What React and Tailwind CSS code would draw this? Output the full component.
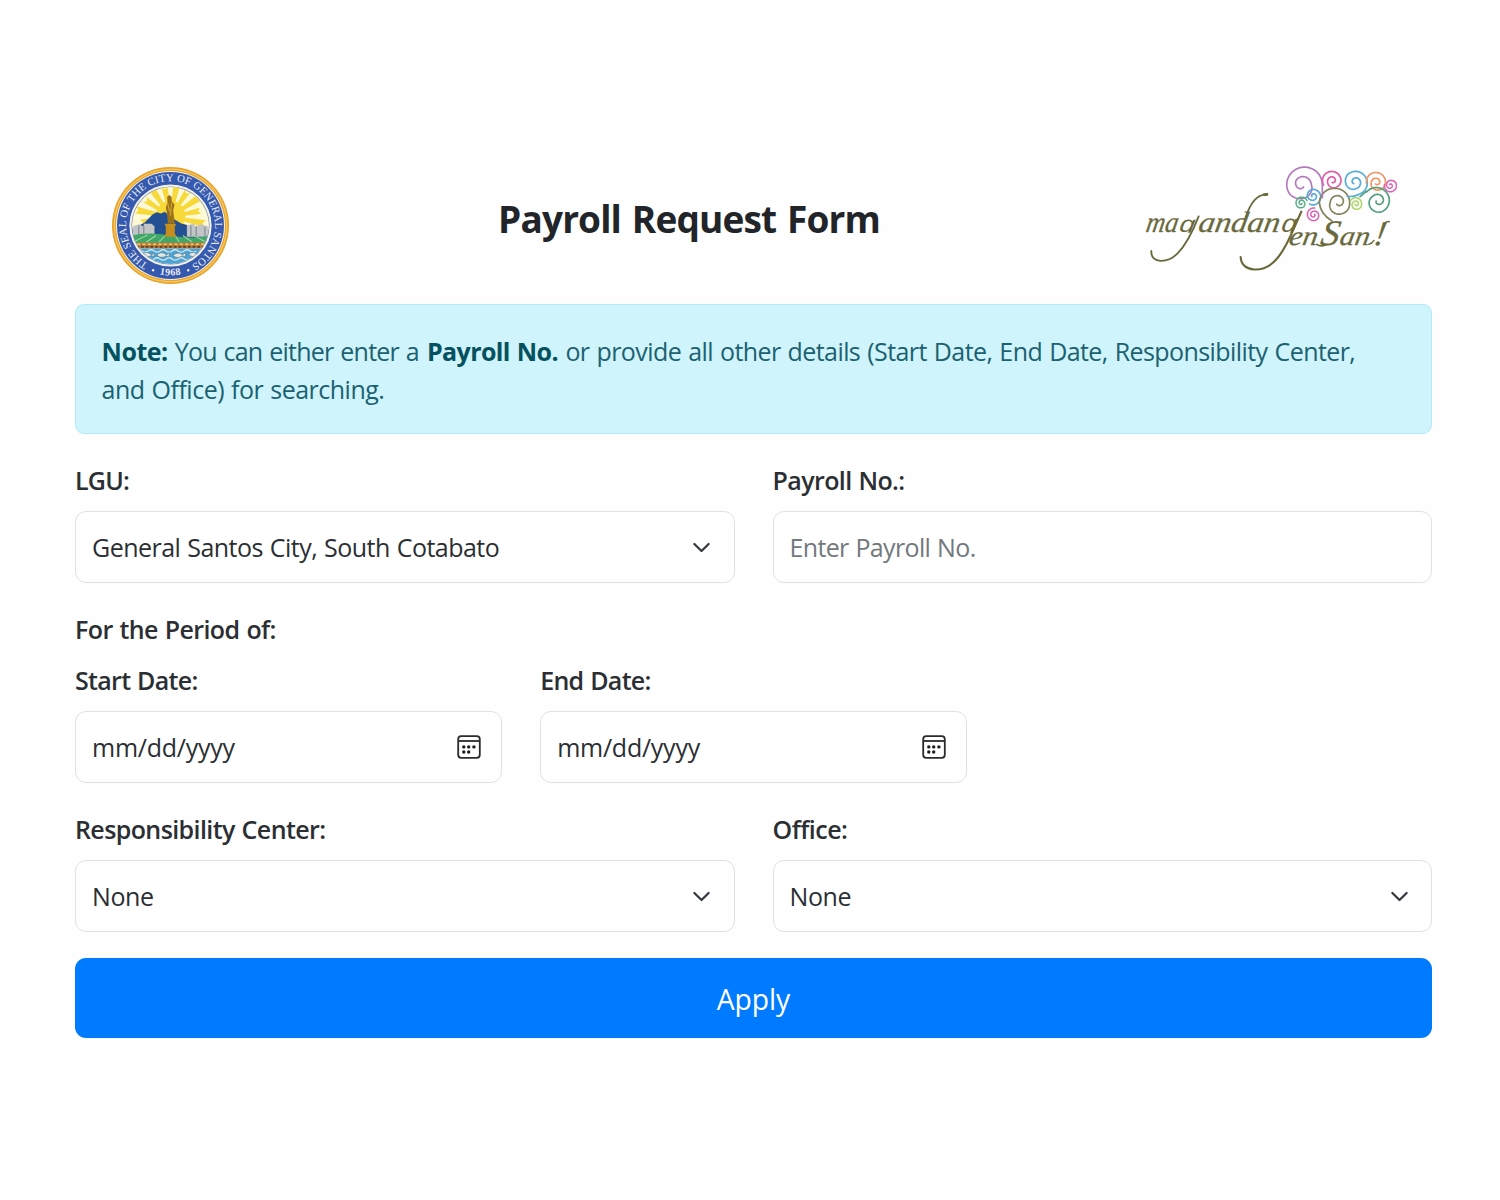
import React from "react";

const rays = Array.from({ length: 16 }, (_, i) => {
  const a = ((i + 0.5) * Math.PI) / 8;
  const r = i % 2 ? 92 : 106;
  const p = (ang, d) => `${(213 + d * Math.cos(ang)).toFixed(1)},${(184 + d * Math.sin(ang)).toFixed(1)}`;
  return `${p(a - 0.2, 20)} ${p(a - 0.1, r)} ${p(a, r - 8)} ${p(a + 0.1, r)} ${p(a + 0.2, 20)}`;
});

function Seal() {
  return (
    <svg viewBox="38 35 350 350" className="size-[117px] shrink-0" aria-label="City seal">
      <defs>
        <path id="ring-top" d="M146 325 A133 133 0 1 1 280 325" />
        <path id="ring-bottom" d="M130 334 A149 149 0 0 0 296 334" />
        <clipPath id="seal-core">
          <circle cx="213" cy="210" r="115" />
        </clipPath>
      </defs>
      <circle cx="213" cy="210" r="175" fill="#e6a22c" />
      <circle cx="213" cy="210" r="168" fill="none" stroke="#f6c75c" strokeWidth="4" />
      <circle cx="213" cy="210" r="163" fill="#f5f1e2" />
      <circle cx="213" cy="210" r="160" fill="#3459ae" />
      <circle cx="213" cy="210" r="123" fill="#f4f3ea" />
      <circle cx="213" cy="210" r="117" fill="#7d8bad" />
      <g clipPath="url(#seal-core)">
        <rect x="95" y="90" width="240" height="240" fill="#fdf9d6" />
        {rays.map((p) => (
          <polygon key={p} points={p} fill="#f8d93a" />
        ))}
        <circle cx="213" cy="180" r="44" fill="#f8d93a" />
        <path d="M95 222 L135 202 L160 176 L172 170 L184 174 L196 169 L212 184 L245 204 L300 218 L335 225 V250 H95Z" fill="#235092" />
        <path d="M99 213 L118 206 L133 213 V205 H156 L165 212 V244 H99Z M262 244 V209 L282 204 L288 212 L305 206 L330 214 V244Z" fill="#c2c5c8" />
        <path d="M133 211 V243 M118 210 V243 M274 210 V243 M290 213 V243 M316 214 V243" stroke="#8b9298" strokeWidth="4" />
        <path d="M95 240 Q150 228 213 240 T335 240 V270 H95Z" fill="#3fa767" />
        <path d="M105 258 L145 238 M140 260 L170 240 M178 260 L196 242 M240 260 L228 242 M278 260 L250 240 M315 258 L280 238" stroke="#a6d99c" strokeWidth="3" />
        <path d="M195 205 H230 L226 214 V235 L232 244 H193 L199 235 V214Z" fill="#c58e1d" />
        <path d="M205 204 L203 176 L199 158 L204 140 L203 125 L209 119 L216 123 L217 138 L225 147 L221 166 L226 204Z" fill="#9b7217" />
        <path d="M204 140 L210 168 M216 142 L213 180" stroke="#d9ac3a" strokeWidth="3" />
        <rect x="95" y="261" width="240" height="18" fill="#b97b3c" />
        <path d="M97 266 H330" stroke="#f1cf65" strokeWidth="5" strokeDasharray="9 7" />
        <path d="M97 274 H330" stroke="#5b4028" strokeWidth="5" strokeDasharray="8 6" />
        <rect x="95" y="279" width="240" height="50" fill="#4ba3d6" />
        <path d="M110 286 q9 -7 18 0 t18 0 t18 0 t18 0 t18 0 t18 0 t18 0 t18 0 t18 0 t18 0 M128 310 q9 -7 18 0 t18 0 t18 0 t18 0 t18 0 t18 0 t18 0 t18 0" fill="none" stroke="#c9e6f2" strokeWidth="4" />
        <path d="M128 296 q14 -11 28 2 l8 -6 v12 l-8 -4 q-15 9 -28 -4 M172 298 q14 -13 29 0 l9 -7 -2 14 -8 -4 q-16 10 -28 -3 M220 300 q16 -14 29 -2 l9 -7 v13 l-9 -3 q-16 10 -29 -1 M267 296 q13 -11 25 0 l7 -5 v11 l-8 -3 q-14 9 -24 -3" fill="#e8e7df" stroke="#5f7d8b" strokeWidth="2" />
      </g>
      <g fill="#e9ecf4" fontFamily="Liberation Serif, serif">
        <text fontSize="32" textLength="700" lengthAdjust="spacing">
          <textPath href="#ring-top" textLength="700" lengthAdjust="spacing">THE SEAL OF THE CITY OF GENERAL SANTOS</textPath>
        </text>
        <text fontSize="30" fontWeight="700" textAnchor="middle" letterSpacing="1.5">
          <textPath href="#ring-bottom" startOffset="50%">1968</textPath>
        </text>
      </g>
      <circle cx="161" cy="344" r="3.5" fill="#f4f4f4" />
      <circle cx="266" cy="344" r="3.5" fill="#f4f4f4" />
    </svg>
  );
}

// [turns travelled, fraction of the outer radius]
const profile = [[0, 1], [0.6, 0.96], [0.78, 0.78], [1, 0.54], [1.4, 0.42], [1.9, 0.12]];

function radiusAt(turn) {
  for (let i = 1; i < profile.length; i++) {
    const [t0, r0] = profile[i - 1];
    const [t1, r1] = profile[i];
    if (turn <= t1) return r0 + ((r1 - r0) * (turn - t0)) / (t1 - t0);
  }
  return 0.12;
}

// Curl that follows an outer circle and winds in towards an inner centre.
function spiral({ from, to, r, start, dir }) {
  const n = 80;
  let d = "";
  for (let i = 0; i <= n; i++) {
    const turn = (i / n) * 1.85;
    const k = Math.min(1, turn);
    const cx = from[0] + (to[0] - from[0]) * k;
    const cy = from[1] + (to[1] - from[1]) * k;
    const rr = r * radiusAt(turn);
    const a = (start * Math.PI) / 180 + dir * turn * 2 * Math.PI;
    d += `${i ? "L" : "M"}${(cx + rr * Math.cos(a)).toFixed(1)} ${(cy + rr * Math.sin(a)).toFixed(1)}`;
  }
  return d;
}

const curls = [
  { c: "#b478bd", w: 5, from: [525, 87], to: [516, 89], r: 52, start: 0, dir: -1 },
  { c: "#e25ba5", w: 5, from: [605, 76], to: [607, 78], r: 28, start: 150, dir: 1 },
  { c: "#55acd8", w: 5, from: [678, 84], to: [675, 82], r: 35, start: 80, dir: -1 },
  { c: "#ef9766", w: 5, from: [738, 80], to: [739, 83], r: 29, start: 170, dir: 1 },
  { c: "#dd60b2", w: 4.5, from: [782, 92], to: [780, 91], r: 19, start: 190, dir: -1 },
  { c: "#55acd8", w: 5, from: [550, 127], to: [549, 124], r: 23, start: 120, dir: -1 },
  { c: "#58b184", w: 4.5, from: [515, 143], to: [514, 144], r: 17, start: -20, dir: -1 },
  { c: "#dd60b2", w: 4.5, from: [551, 178], to: [551, 179], r: 19, start: -80, dir: -1 },
  { c: "#85835c", w: 5, from: [611, 142], to: [624, 142], r: 43, start: 180, dir: 1 },
  { c: "#a9d665", w: 4.5, from: [677, 146], to: [678, 147], r: 18, start: -150, dir: 1 },
  { c: "#529e7b", w: 5, from: [739, 135], to: [744, 137], r: 38, start: 220, dir: 1 },
];

function Wordmark() {
  return (
    <svg viewBox="45 30 756 330" className="h-[110px] w-[252px] shrink-0 self-start" aria-label="magandang GenSan">
      <defs>
        <clipPath id="above-base">
          <rect x="0" y="100" width="560" height="133" />
        </clipPath>
      </defs>
      <g fill="none" strokeLinecap="round">
        {curls.map((s, i) => (
          <path key={i} d={spiral(s)} stroke={s.c} strokeWidth={s.w} />
        ))}
        <path d="M577 84 V128" stroke="#b478bd" strokeWidth="5" />
        <path d="M568 142 Q570 176 606 198" stroke="#85835c" strokeWidth="5" />
        <path d="M652 124 Q670 126 684 119" stroke="#55acd8" strokeWidth="5" />
        <path d="M690 125 Q698 118 709 109" stroke="#529e7b" strokeWidth="5" />
      </g>
      <g fill="#6a693c" stroke="#6a693c" strokeWidth="0.8" fontFamily="Liberation Serif, serif" fontStyle="italic">
        <g clipPath="url(#above-base)">
          <g transform="translate(41 0) skewX(-10)">
            <text y="231" fontSize="88" x="45" textLength="96" lengthAdjust="spacingAndGlyphs">ma</text>
            <text y="230" fontSize="70" x="145" fontFamily="Liberation Sans, sans-serif" strokeWidth="0" textLength="46" lengthAdjust="spacingAndGlyphs">g</text>
            <text y="231" fontSize="88" x="202" textLength="244" lengthAdjust="spacingAndGlyphs">andan</text>
            <text y="230" fontSize="76" x="451" fontFamily="Liberation Sans, sans-serif" strokeWidth="0" textLength="46" lengthAdjust="spacingAndGlyphs">g</text>
          </g>
        </g>
        <g transform="translate(48 0) skewX(-10)">
          <text y="271" fontSize="82" x="474" textLength="86" lengthAdjust="spacingAndGlyphs">en</text>
          <text y="271" fontSize="108" x="568" textLength="56" lengthAdjust="spacingAndGlyphs">S</text>
          <text y="271" fontSize="82" x="626" textLength="90" lengthAdjust="spacingAndGlyphs">an</text>
          <text y="271" fontSize="104" x="728">!</text>
        </g>
      </g>
      <g fill="none" stroke="#6a693c" strokeLinecap="round">
        <path d="M206 184 C190 225 172 266 142 296 C114 324 62 328 64 288" strokeWidth="5.5" />
        <path d="M346 190 C358 152 378 116 411 119" strokeWidth="5.5" />
        <path d="M402 119 L411 118" strokeWidth="8" />
        <path d="M514 170 C490 220 474 274 440 312 C402 356 334 354 332 306" strokeWidth="6.5" />
        <path d="M560 268 C568 274 580 274 592 268" strokeWidth="5" />
        <path d="M716 268 Q726 266 732 256" strokeWidth="4" />
        <path d="M764 206 Q768 198 778 200" strokeWidth="4.5" />
      </g>
    </svg>
  );
}

function Chevron() {
  return (
    <svg viewBox="0 0 16 16" className="size-[19px] shrink-0" fill="none" stroke="#343a40" strokeWidth="1.9" strokeLinecap="round" strokeLinejoin="round">
      <path d="m2 5 6 6 6-6" />
    </svg>
  );
}

function Calendar() {
  return (
    <svg viewBox="0 0 24 24" className="h-6 w-6 shrink-0" fill="none" stroke="#2b2b2b">
      <rect x="1.2" y="1.2" width="21.6" height="21.6" rx="3" strokeWidth="1.8" />
      <path d="M1.2 6H22.8" strokeWidth="1.8" />
      <g fill="#1d1d1d" stroke="none">
        <circle cx="6.8" cy="11.9" r="1.7" />
        <circle cx="11.7" cy="11.9" r="1.7" />
        <circle cx="16.9" cy="11.9" r="1.7" />
        <circle cx="6.8" cy="17" r="1.7" />
        <circle cx="11.7" cy="17" r="1.7" />
      </g>
    </svg>
  );
}

function Field({ label, labelClass, children, icon, pad = "pr-[22.5px]", textClass }) {
  return (
    <div className="min-w-0">
      <div className={`mb-[13px] h-[38px] pt-px font-semibold leading-[38px] ${labelClass}`}>{label}</div>
      <div className={`flex h-[72px] items-center justify-between rounded-[11px] border border-[#dee2e6] bg-white pl-4 ${pad}`}>
        <span className={`whitespace-nowrap pt-0.5 ${textClass}`}>{children}</span>
        {icon}
      </div>
    </div>
  );
}

export default function App() {
  return (
    <div className="h-[1200px] w-[1500px] overflow-hidden bg-[#fefefe] pl-[75px] pr-[68px] pt-[165px] font-['Open_Sans',sans-serif] text-[25px] text-[#2b2f33]">
      <header className="flex h-[120px] items-center justify-between pl-[37px] pr-[35px]">
        <Seal />
        <h1 className="mb-[13px] ml-1 whitespace-nowrap text-[37px] font-bold leading-[46px] tracking-[-0.85px] text-[#212529] [word-spacing:2px]">Payroll Request Form</h1>
        <Wordmark />
      </header>

      <div className="mt-[19px] h-[130px] rounded-[9px] border border-[#b0ebf8] bg-[#cff4fc] px-[25.6px] pt-[27px] leading-[38.4px] text-[#1b6170]">
        <div className="whitespace-nowrap">
          <b className="tracking-[-0.5px] text-[#055160]">Note:</b>
          <span className="ml-[7px] tracking-[-0.75px] [word-spacing:1px]">You can either enter a</span>
          <b className="ml-[8px] tracking-[-0.6px] text-[#055160] [word-spacing:1px]">Payroll No.</b>
          <span className="ml-[7.5px] tracking-[-0.58px] [word-spacing:1.1px]">or provide all other details (Start Date, End Date, Responsibility Center,</span>
        </div>
        <div className="tracking-[-0.5px] [word-spacing:1px]">and Office) for searching.</div>
      </div>

      <div className="mt-[26px] grid grid-cols-2 gap-x-[38px]">
        <Field label="LGU:" labelClass="tracking-[-0.8px]" textClass="tracking-[-0.53px] [word-spacing:1px]" icon={<Chevron />}>
          General Santos City, South Cotabato
        </Field>
        <Field label="Payroll No.:" labelClass="tracking-[-0.6px] [word-spacing:1px]" textClass="tracking-[-0.65px] text-[#73787d] [word-spacing:1px]">
          Enter Payroll No.
        </Field>
      </div>

      <div className="mb-[13px] mt-[26px] h-[38px] pt-px font-semibold leading-[38px] tracking-[-0.6px] [word-spacing:1px]">For the Period of:</div>

      <div className="grid grid-cols-3 gap-x-[38.4px]">
        <Field label="Start Date:" labelClass="tracking-[-0.7px] [word-spacing:1px]" textClass="tracking-[-0.25px]" pad="pr-5" icon={<Calendar />}>
          mm/dd/yyyy
        </Field>
        <Field label="End Date:" labelClass="tracking-[-0.7px] [word-spacing:1px]" textClass="tracking-[-0.25px]" pad="pr-5" icon={<Calendar />}>
          mm/dd/yyyy
        </Field>
      </div>

      <div className="mt-[26px] grid grid-cols-2 gap-x-[38px]">
        <Field label="Responsibility Center:" labelClass="tracking-[-0.6px] [word-spacing:1px]" textClass="tracking-[-0.4px]" icon={<Chevron />}>
          None
        </Field>
        <Field label="Office:" labelClass="tracking-[-0.5px]" textClass="tracking-[-0.4px]" icon={<Chevron />}>
          None
        </Field>
      </div>

      <button className="mt-[26px] block h-20 w-full rounded-[11px] bg-[#007bff] pt-0.5 text-[28.3px] leading-none tracking-[-0.1px] text-white">
        Apply
      </button>
    </div>
  );
}
